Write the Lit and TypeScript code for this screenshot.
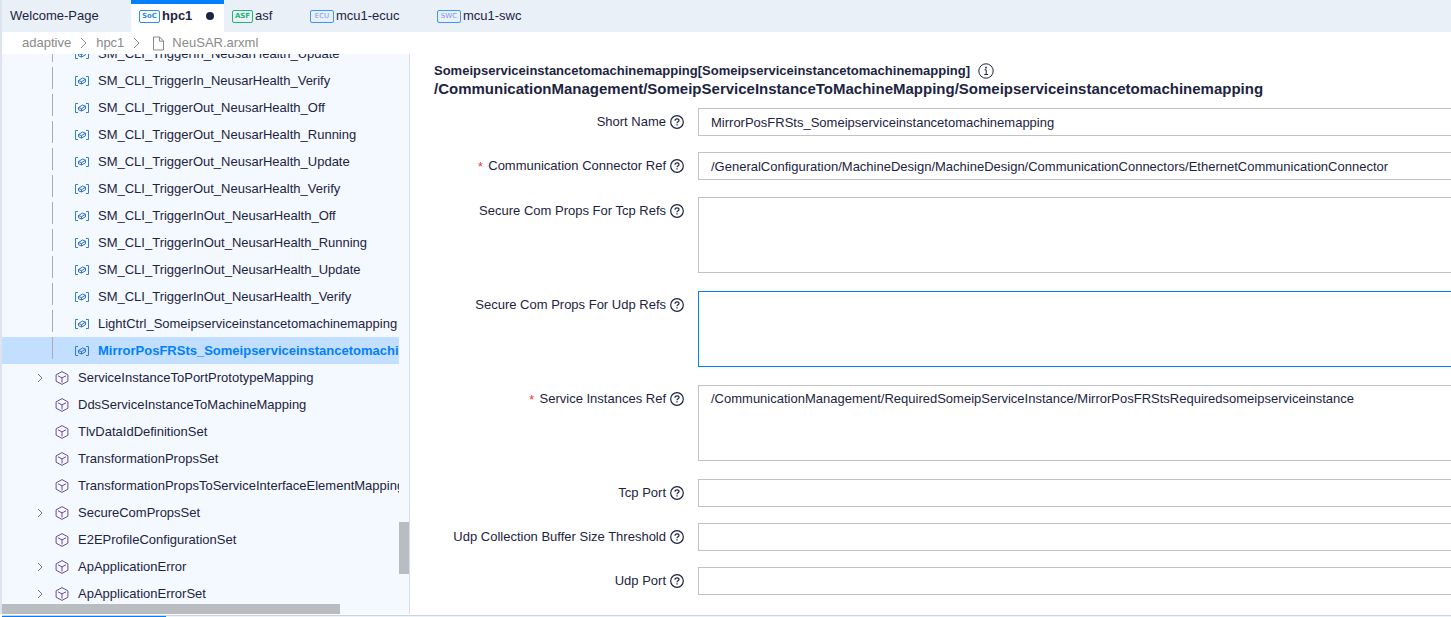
import { LitElement, html, css, svg, nothing } from "lit";
import { customElement, state } from "lit/decorators.js";
import { classMap } from "lit/directives/class-map.js";

interface Tab {
  label: string;
  badge?: string;
  kind?: string;
  dirty?: boolean;
}

interface TreeRow {
  label: string;
  leaf?: boolean;
  expandable?: boolean;
}

interface Field {
  id: string;
  label: string;
  value?: string;
  required?: boolean;
}

const TABS: Tab[] = [
  { label: "Welcome-Page" },
  { label: "hpc1", badge: "SoC", kind: "soc", dirty: true },
  { label: "asf", badge: "ASF", kind: "asf" },
  { label: "mcu1-ecuc", badge: "ECU", kind: "mcu" },
  { label: "mcu1-swc", badge: "SWC", kind: "mcu" },
];

const ROWS: TreeRow[] = [
  { label: "SM_CLI_TriggerIn_NeusarHealth_Update", leaf: true },
  { label: "SM_CLI_TriggerIn_NeusarHealth_Verify", leaf: true },
  { label: "SM_CLI_TriggerOut_NeusarHealth_Off", leaf: true },
  { label: "SM_CLI_TriggerOut_NeusarHealth_Running", leaf: true },
  { label: "SM_CLI_TriggerOut_NeusarHealth_Update", leaf: true },
  { label: "SM_CLI_TriggerOut_NeusarHealth_Verify", leaf: true },
  { label: "SM_CLI_TriggerInOut_NeusarHealth_Off", leaf: true },
  { label: "SM_CLI_TriggerInOut_NeusarHealth_Running", leaf: true },
  { label: "SM_CLI_TriggerInOut_NeusarHealth_Update", leaf: true },
  { label: "SM_CLI_TriggerInOut_NeusarHealth_Verify", leaf: true },
  { label: "LightCtrl_Someipserviceinstancetomachinemapping", leaf: true },
  { label: "MirrorPosFRSts_Someipserviceinstancetomachinemapping", leaf: true },
  { label: "ServiceInstanceToPortPrototypeMapping", expandable: true },
  { label: "DdsServiceInstanceToMachineMapping" },
  { label: "TlvDataIdDefinitionSet" },
  { label: "TransformationPropsSet" },
  { label: "TransformationPropsToServiceInterfaceElementMapping" },
  { label: "SecureComPropsSet", expandable: true },
  { label: "E2EProfileConfigurationSet" },
  { label: "ApApplicationError", expandable: true },
  { label: "ApApplicationErrorSet", expandable: true },
];

const HEAD_FIELDS: Field[] = [
  { id: "short-name", label: "Short Name", value: "MirrorPosFRSts_Someipserviceinstancetomachinemapping" },
  {
    id: "connector",
    label: "Communication Connector Ref",
    required: true,
    value: "/GeneralConfiguration/MachineDesign/MachineDesign/CommunicationConnectors/EthernetCommunicationConnector",
  },
];

const AREA_FIELDS: Field[] = [
  { id: "tcp-refs", label: "Secure Com Props For Tcp Refs" },
  { id: "udp-refs", label: "Secure Com Props For Udp Refs" },
  {
    id: "instances",
    label: "Service Instances Ref",
    required: true,
    value: "/CommunicationManagement/RequiredSomeipServiceInstance/MirrorPosFRStsRequiredsomeipserviceinstance",
  },
];

const PORT_FIELDS: Field[] = [
  { id: "tcp-port", label: "Tcp Port" },
  { id: "udp-threshold", label: "Udp Collection Buffer Size Threshold" },
  { id: "udp-port", label: "Udp Port" },
];

const icon = (name: string, w: number, h: number, body: unknown) => html`
  <svg class="icon ${name}" width=${w} height=${h} viewBox="0 0 ${w} ${h}" fill="none" aria-hidden="true">${body}</svg>
`;

const chevron = () => icon("chevron", 6, 10, svg`<path d="M1 1l4 4-4 4" stroke="currentColor" />`);

const crumbChevron = () => icon("sep", 7, 12, svg`<path d="M1 1l5 5-5 5" stroke="currentColor" />`);

const fileIcon = () =>
  icon("file", 13, 15, svg`
    <path d="M1.500 1h6.200l3.800 4v9H1.500z" stroke="currentColor" stroke-linejoin="round" />
    <path d="M7.500 1v4.200h4" stroke="currentColor" />`);

const cubeIcon = () =>
  icon("cube", 14, 14, svg`
    <path d="M7 .6l5.900 3.200v6.400L7 13.400l-5.900-3.200V3.800z" stroke="#6b4a96" stroke-linejoin="round" />
    <path d="M3 4.800l4 2.100 4-2.100M7 6.900v4.600" stroke="#6b4a96" />`);

const leafIcon = () =>
  icon("leaf", 16, 10, svg`
    <path d="M4 .5H1.500v9H4M12 .5h2.500v9H12" stroke="#2f7fd6" />
    <path d="M4.500 4.500L8.500 2l3 1.200v2.600L7.500 8l-3-1.200zM4.500 4.500l3 1.200 4-2.500M7.500 5.700V8" stroke="#2f6fc4" stroke-linejoin="round" />`);

const helpIcon = () =>
  icon("help", 14, 14, svg`
    <circle cx="7" cy="7" r="6.300" stroke="currentColor" stroke-width="1.200" />
    <path d="M5 5.700c0-1.200.9-1.900 2-1.900s2 .7 2 1.700c0 1.300-2 1.400-2 2.800" stroke="currentColor" stroke-width="1.200" />
    <path d="M7 9.300v1.300" stroke="currentColor" stroke-width="1.300" />`);

const infoIcon = () =>
  icon("info", 16, 16, svg`
    <circle cx="8" cy="8" r="7.200" stroke="currentColor" />
    <path d="M6.500 6.800H8.200v4.700M6.300 11.500h3.800" stroke="currentColor" />
    <path d="M8 3.800v1.600" stroke="currentColor" stroke-width="1.600" />`);

@customElement("app-root")
export class AppRoot extends LitElement {
  static styles = css`
    :host {
      display: flex;
      flex-direction: column;
      height: 100vh;
      box-sizing: border-box;
      overflow: hidden;
      background: #fff;
      color: #1d2440;
      font: 13px/20px "Liberation Sans", Arial, sans-serif;
    }
    * { box-sizing: border-box; }
    button, input, textarea { font: inherit; color: inherit; }
    .icon { display: block; flex: none; }

    .workspace {
      flex: 1;
      min-height: 0;
      display: flex;
      flex-direction: column;
      border-left: 2px solid #dde3ef;
    }

    .tabs { display: flex; flex: none; height: 32px; background: #e9f0f8; }
    .tab {
      display: flex;
      align-items: center;
      gap: 2px;
      padding: 0 8px;
      border: 0;
      background: none;
      white-space: nowrap;
    }
    .tab.welcome { width: 129px; }
    .tab.soc { width: 93px; border-top: 4px solid #0080ff; padding-bottom: 4px; background: #fff; font-weight: bold; }
    .tab.asf { width: 78px; }
    .tab.mcu { width: 127px; }
    .dot { width: 8px; height: 8px; margin-left: 12px; border-radius: 50%; background: #1d2440; }
    .badge {
      height: 13px;
      border: 1px solid currentColor;
      border-radius: 2px;
      font: bold 7px/11px "DejaVu Sans", sans-serif;
      text-align: center;
    }
    .badge.soc { width: 21px; color: #2a8cf5; }
    .badge.asf { width: 21px; color: #22b573; }
    .badge.mcu { width: 24px; border-color: #3a96fb; color: #7d95f0; font-weight: normal; }

    .crumbs {
      display: flex;
      flex: none;
      align-items: center;
      height: 22px;
      padding-left: 20px;
      color: #8a8a8a;
    }
    .crumbs a { color: inherit; text-decoration: none; }
    .sep { margin: 0 9px; }
    .file { margin: 0 7px 0 3px; }

    .body { display: flex; flex: 1; min-height: 0; }
    .tree {
      display: grid;
      flex: none;
      grid-template: minmax(0, 1fr) 10px / minmax(0, 1fr) 10px;
      width: 408px;
      border-right: 1px solid #d8ddea;
      background: #f4f9ff;
    }
    .view { grid-area: 1 / 1 / 3 / 2; overflow: hidden; }
    .rows { margin: -14px 0 0; padding: 0; list-style: none; }
    .row {
      display: flex;
      align-items: center;
      width: 100%;
      height: 27px;
      padding: 0 0 0 35px;
      border: 0;
      background: none;
      text-align: left;
      white-space: nowrap;
    }
    .row.selected { background: #c2dfff; color: #0080ff; font-weight: bold; }
    .row .twisty { flex: none; width: 18px; color: #6c7385; }
    .guide { flex: none; align-self: flex-start; width: 1px; height: 22px; margin-left: 15px; background: #a9abb0; }
    .leaf { margin: 0 8px 0 21px; }
    .cube { margin: 0 9px 0 0; }
    .vbar { grid-area: 1 / 2; display: flex; flex-direction: column; justify-content: flex-end; padding-bottom: 30px; }
    .vbar span { height: 52px; background: #b9bcc0; }
    .hbar { grid-area: 2 / 1 / 3 / 3; z-index: 1; }
    .hbar span { display: block; width: 83%; height: 10px; background: #b9bcc0; }

    .form { flex: 1; min-width: 0; padding: 8px 0 0 24px; }
    h1, h2 { margin: 0; white-space: nowrap; font-weight: bold; }
    h1 { display: flex; align-items: center; gap: 8px; font-size: 13px; line-height: 18px; }
    h2 { margin-bottom: 10px; font-size: 15px; line-height: 18px; }
    .fields { display: flex; flex-direction: column; gap: 16px; }
    .areas { display: flex; flex-direction: column; gap: 18px; padding: 1px 0 2px; }
    .field { display: flex; align-items: flex-start; }
    .field label {
      display: flex;
      flex: none;
      align-items: center;
      justify-content: flex-end;
      gap: 4px;
      width: 250px;
      height: 28px;
      margin-right: 14px;
      line-height: 28px;
      white-space: nowrap;
    }
    .star { padding-top: 4px; color: #f23c3c; font-family: "Liberation Mono", monospace; }
    input, textarea {
      display: block;
      flex: 1;
      min-width: 0;
      height: 28px;
      margin: 0;
      padding: 0 12px;
      border: 1px solid #c0c2c6;
      border-right: 0;
      border-radius: 0;
      outline: none;
      background: #fff;
      resize: none;
    }
    textarea { height: 76px; padding-top: 3px; line-height: 20px; }
    .active { border-color: #0080ff; }

    .dock { flex: none; height: 2px; margin: 1px 0 0 2px; border-top: 1px solid #cfd2d8; background: #eef3fa; }
    .dock span { display: block; width: 164px; height: 1px; background: #0080ff; }
  `;

  @state() private activeField = "udp-refs";
  @state() private selected = 11;

  private renderTab(t: Tab) {
    return html`<button class="tab ${t.kind ?? "welcome"}" role="tab" aria-selected=${t.kind === "soc"}>
      ${t.badge ? html`<span class="badge ${t.kind}">${t.badge}</span>` : nothing}
      <span>${t.label}</span>
      ${t.dirty ? html`<span class="dot"></span>` : nothing}
    </button>`;
  }

  private renderRow(r: TreeRow, i: number) {
    return html`<li>
      <button class=${classMap({ row: true, selected: i === this.selected })} @click=${() => (this.selected = i)}>
        ${r.leaf
          ? html`<span class="guide"></span>${leafIcon()}`
          : html`<span class="twisty">${r.expandable ? chevron() : nothing}</span>${cubeIcon()}`}
        <span>${r.label}</span>
      </button>
    </li>`;
  }

  private renderField(f: Field, area = false) {
    const cls = classMap({ active: f.id === this.activeField });
    const focus = () => (this.activeField = f.id);
    return html`<div class="field">
      <label for=${f.id}>
        ${f.required ? html`<span class="star">*</span>` : nothing}
        <span>${f.label}</span>${helpIcon()}
      </label>
      ${area
        ? html`<textarea id=${f.id} class=${cls} .value=${f.value ?? ""} @focus=${focus}></textarea>`
        : html`<input id=${f.id} class=${cls} type="text" .value=${f.value ?? ""} @focus=${focus} />`}
    </div>`;
  }

  render() {
    return html`
      <div class="workspace">
        <div class="tabs" role="tablist">${TABS.map((t) => this.renderTab(t))}</div>
        <nav class="crumbs">
          <a href="#adaptive">adaptive</a>${crumbChevron()}
          <a href="#hpc1">hpc1</a>${crumbChevron()}
          ${fileIcon()}<a href="#file">NeuSAR.arxml</a>
        </nav>
        <div class="body">
          <aside class="tree">
            <div class="view"><ul class="rows">${ROWS.map((r, i) => this.renderRow(r, i))}</ul></div>
            <div class="vbar"><span></span></div>
            <div class="hbar"><span></span></div>
          </aside>
          <main class="form">
            <h1>Someipserviceinstancetomachinemapping[Someipserviceinstancetomachinemapping] ${infoIcon()}</h1>
            <h2>/CommunicationManagement/SomeipServiceInstanceToMachineMapping/Someipserviceinstancetomachinemapping</h2>
            <div class="fields">
              ${HEAD_FIELDS.map((f) => this.renderField(f))}
              <div class="areas">${AREA_FIELDS.map((f) => this.renderField(f, true))}</div>
              ${PORT_FIELDS.map((f) => this.renderField(f))}
            </div>
          </main>
        </div>
      </div>
      <div class="dock"><span></span></div>
    `;
  }
}
